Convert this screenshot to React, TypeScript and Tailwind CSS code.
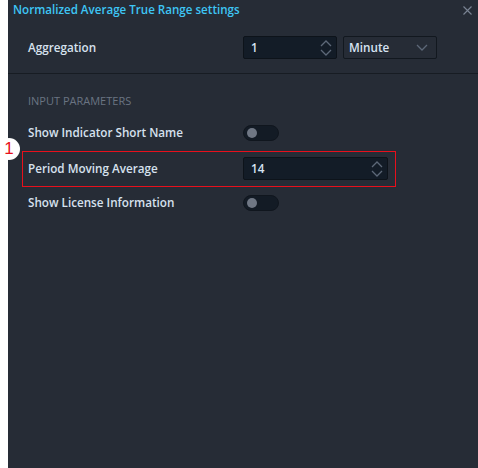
import React from 'react';

const font = { fontFamily: '"Open Sans", "Noto Sans", sans-serif' };

const Spinner = () => (
    <svg width="12" height="18" viewBox="0 0 12 18" fill="none" stroke="#5d6878" strokeWidth="1.3">
        <path d="M1 7 L6 2 L11 7" />
        <path d="M1 11 L6 16 L11 11" />
    </svg>
);

const Toggle = () => (
    <div className="w-[36px] h-[16px] rounded-full bg-[#131b25] border border-[#10161e] flex items-center pl-[3px]">
        <div className="w-[10px] h-[10px] rounded-full bg-[#6f7784]"></div>
    </div>
);

const Label: React.FC<{ children: React.ReactNode }> = ({ children }) => (
    <div className="w-[215px] text-[11.7px] font-semibold text-[#d6e1ee]">{children}</div>
);

export default function App() {
    return (
        <div className="w-[478px] h-[468px] flex bg-white" style={font}>
            <div className="w-2 shrink-0 bg-white"></div>
            <div className="flex-1 bg-[#262c36] relative flex flex-col">
                {/* Title */}
                <div className="h-5 flex items-center justify-between pl-[5px] pr-[6px]">
                    <span className="text-[11.6px] font-semibold text-[#3ec6f5]">Normalized Average True Range settings</span>
                    <svg width="9" height="9" viewBox="0 0 9 9" stroke="#7a8494" strokeWidth="1.1">
                        <path d="M0.5 0.5 L8.5 8.5 M8.5 0.5 L0.5 8.5" />
                    </svg>
                </div>

                {/* Aggregation */}
                <div className="mt-[16px] h-[23px] flex items-center pl-[20px]">
                    <Label>Aggregation</Label>
                    <div className="w-[94px] h-[23px] bg-[#131c27] border border-[#0d131a] rounded-[2px] flex items-center justify-between pl-[7px] pr-[4px]">
                        <span className="text-[11.7px] font-semibold text-[#d6e4f3]">1</span>
                        <Spinner />
                    </div>
                    <div className="ml-[6px] w-[94px] h-[23px] bg-[#262c36] border border-[#12181f] rounded-[2px] flex items-center justify-between pl-[5px] pr-[8px]">
                        <span className="text-[11.7px] font-semibold text-[#d6e4f3]">Minute</span>
                        <svg width="12" height="7" viewBox="0 0 12 7" fill="none" stroke="#5d6878" strokeWidth="1.3">
                            <path d="M1 1 L6 6 L11 1" />
                        </svg>
                    </div>
                </div>

                <div className="mt-[14px] h-px bg-[#171c23]"></div>

                <div className="mt-[20px] h-[14px] flex items-center pl-[20px] text-[11px] text-[#6a7482] uppercase">
                    Input Parameters
                </div>

                <div className="mt-[13px] h-[24px] flex items-center pl-[20px]">
                    <Label>Show Indicator Short Name</Label>
                    <Toggle />
                </div>

                <div className="mt-[12px] h-[23px] flex items-center pl-[20px]">
                    <Label>Period Moving Average</Label>
                    <div className="w-[145px] h-[23px] bg-[#131c27] border border-[#0d131a] rounded-[2px] flex items-center justify-between pl-[7px] pr-[4px]">
                        <span className="text-[11.7px] font-semibold text-[#d6e4f3]">14</span>
                        <Spinner />
                    </div>
                </div>

                <div className="mt-[11px] h-[24px] flex items-center pl-[20px]">
                    <Label>Show License Information</Label>
                    <Toggle />
                </div>

                {/* annotation highlight */}
                <div className="absolute left-[14px] top-[151px] w-[374px] h-[36px] border border-[#e8101c]"></div>
            </div>

            {/* annotation badge */}
            <div className="absolute left-[-2px] top-[138px] w-[22px] h-[22px] rounded-full bg-white flex items-center justify-center text-[17px] text-[#e8101c]" style={{ fontFamily: '"Liberation Sans", sans-serif' }}>
                1
            </div>
        </div>
    );
}
